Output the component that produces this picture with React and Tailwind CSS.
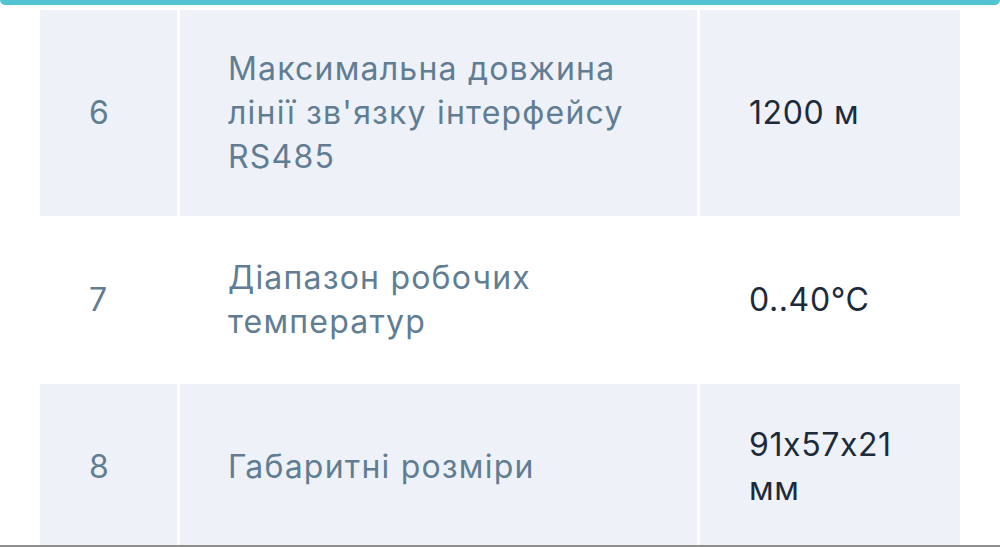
export default function App() {
  const rows = [
    { n: "6", name: "Максимальна довжина лінії зв'язку інтерфейсу RS485", val: "1200 м", bg: "bg-[#eef2f8]", h: "h-[206px]" },
    { n: "7", name: "Діапазон робочих температур", val: "0..40°C", bg: "bg-white", h: "h-[168px]" },
    { n: "8", name: "Габаритні розміри", val: "91x57x21 мм", bg: "bg-[#eef2f8]", h: "h-[166px]" },
  ];
  return (
    <div
      className="relative h-[547px] w-[1000px] overflow-hidden bg-white"
      style={{ fontFamily: "Inter, 'Noto Sans', sans-serif", fontFeatureSettings: "'calt' 0" }}
    >
      <div className="h-[5px] w-full rounded-b-[7px] bg-[#52c4d2]" />
      <div className="ml-[40px] mt-[5px] flex w-[920px] flex-col">
        {rows.map((r) => (
          <div key={r.n} className={`grid grid-cols-[137px_517px_260px] gap-x-[3px] ${r.h}`}>
            <div className={`flex items-center pl-[49px] text-[32px] leading-[44px] tracking-[1px] text-[#617d93] ${r.bg}`}>{r.n}</div>
            <div className={`flex items-center pl-[48px] pr-[48px] text-[32px] leading-[44px] tracking-[1.2px] text-[#617d93] ${r.bg}`}>{r.name}</div>
            <div className={`flex items-center pl-[49px] pr-[48px] text-[32px] leading-[44px] tracking-[0.6px] text-[#1c2b3b] ${r.bg}`}>{r.val}</div>
          </div>
        ))}
      </div>
      <div className="absolute bottom-0 left-0 h-[2px] w-full bg-[#8d8d8d]" />
    </div>
  );
}
